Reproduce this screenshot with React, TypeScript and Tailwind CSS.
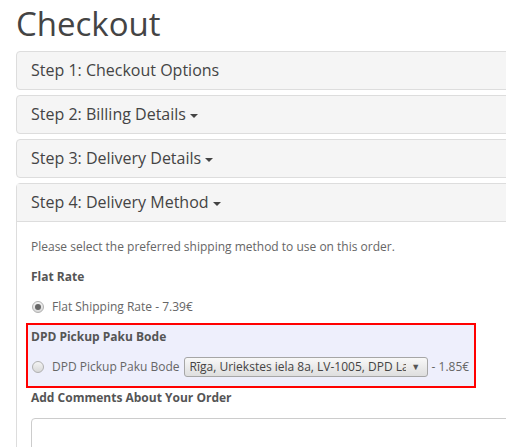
import React from 'react';

const Caret = () => (
  <span className="ml-[4px] inline-block h-0 w-0 border-x-[4px] border-t-[4px] border-x-transparent border-t-[#444] align-middle" />
);

const Radio = ({ checked = false }: { checked?: boolean }) => (
  <span className="flex h-[12px] w-[12px] shrink-0 items-center justify-center rounded-full border border-[#b0b0b0] bg-gradient-to-b from-[#f4f4f4] to-[#d8d8d8]">
    {checked && <span className="h-[6px] w-[6px] rounded-full bg-[#666]" />}
  </span>
);

const steps = [
  { title: 'Step 1: Checkout Options', caret: false },
  { title: 'Step 2: Billing Details', caret: true },
  { title: 'Step 3: Delivery Details', caret: true },
];

const App: React.FC = () => {
  return (
    <div className="h-[447px] w-[506px] overflow-hidden bg-white font-['Open_Sans',sans-serif] text-[12px] text-[#666]">
      <div className="w-[540px] pl-4">
        <h1 className="pt-[4px] pb-[8px] text-[33px] leading-[39px] text-[#444]">Checkout</h1>

        {steps.map(step => (
          <div key={step.title} className="mb-[5px] rounded border border-[#ddd] bg-[#f5f5f5]">
            <div className="px-[14px] py-[10px] text-[16px] leading-[17px] text-[#444]">
              {step.title}
              {step.caret && <Caret />}
            </div>
          </div>
        ))}

        <div className="rounded border border-[#ddd] bg-white">
          <div className="border-b border-[#ddd] bg-[#f5f5f5] px-[14px] py-[10px] text-[16px] leading-[17px] text-[#444]">
            Step 4: Delivery Method
            <Caret />
          </div>
          <div className="px-[14px] pt-[15px] pb-[15px] leading-[20px]">
            <p className="mb-[10px]">Please select the preferred shipping method to use on this order.</p>
            <p className="mb-[10px] font-bold text-[#555]">Flat Rate</p>
            <div className="flex items-center gap-[8px] pl-[1px]">
              <Radio checked />
              <span>Flat Shipping Rate - 7.39€</span>
            </div>
            <div className="mt-[6px] ml-[-5px] w-[450px] border-2 border-[#f00] bg-[#eeeffc] pl-[3px] pt-[2px] pb-[9px]">
              <p className="mb-[10px] font-bold text-[#555]">DPD Pickup Paku Bode</p>
              <div className="flex items-center pl-[1px]">
                <Radio />
                <span className="ml-[8px]">DPD Pickup Paku Bode</span>
                <div className="ml-[4px] flex h-[20px] w-[244px] items-center rounded-[3px] border border-[#a6a6a6] bg-gradient-to-b from-[#f8f8f8] to-[#dedede] pl-[5px] text-[#444]">
                  <span className="w-[216px] overflow-hidden whitespace-nowrap">Rīga, Uriekstes iela 8a, LV-1005, DPD Latvija</span>
                  <span className="flex w-[20px] justify-center text-[9px] text-[#555]">▼</span>
                </div>
                <span className="ml-[4px]">- 1.85€</span>
              </div>
            </div>
            <p className="mb-[10px] font-bold text-[#555]">Add Comments About Your Order</p>
            <div className="h-[80px] rounded border border-[#ccc] bg-white" />
          </div>
        </div>
      </div>
    </div>
  );
};

export default App;
